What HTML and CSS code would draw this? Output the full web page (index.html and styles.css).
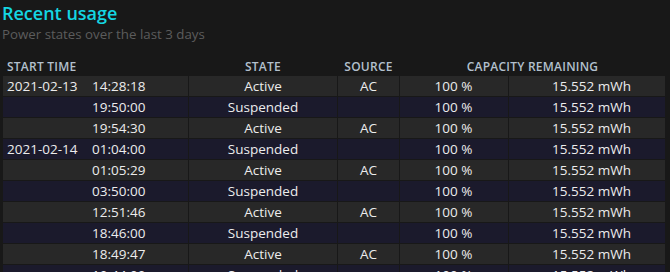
FILE: index.html
```html
<!DOCTYPE html>
<html lang="en">
<head>
<meta charset="utf-8">
<title>Recent usage</title>
<link rel="stylesheet" href="styles.css">
</head>
<body>
<h2 class="title">Recent usage</h2>
<div class="subtitle">Power states over the last 3 days</div>
<table class="usage">
  <colgroup>
    <col class="c-time">
    <col class="c-state">
    <col class="c-source">
    <col class="c-pct">
    <col class="c-mwh">
  </colgroup>
  <thead>
    <tr>
      <th class="left">START TIME</th>
      <th>STATE</th>
      <th>SOURCE</th>
      <th colspan="2">CAPACITY REMAINING</th>
    </tr>
  </thead>
  <tbody>
    <tr class="odd"><td class="dt"><span class="date">2021-02-13</span><span class="time">14:28:18</span></td><td class="state">Active</td><td class="src">AC</td><td class="pct">100 %</td><td class="mwh">15.552 mWh</td></tr>
    <tr class="even"><td class="dt"><span class="date"></span><span class="time">19:50:00</span></td><td class="state">Suspended</td><td class="src"></td><td class="pct">100 %</td><td class="mwh">15.552 mWh</td></tr>
    <tr class="odd"><td class="dt"><span class="date"></span><span class="time">19:54:30</span></td><td class="state">Active</td><td class="src">AC</td><td class="pct">100 %</td><td class="mwh">15.552 mWh</td></tr>
    <tr class="even"><td class="dt"><span class="date">2021-02-14</span><span class="time">01:04:00</span></td><td class="state">Suspended</td><td class="src"></td><td class="pct">100 %</td><td class="mwh">15.552 mWh</td></tr>
    <tr class="odd"><td class="dt"><span class="date"></span><span class="time">01:05:29</span></td><td class="state">Active</td><td class="src">AC</td><td class="pct">100 %</td><td class="mwh">15.552 mWh</td></tr>
    <tr class="even"><td class="dt"><span class="date"></span><span class="time">03:50:00</span></td><td class="state">Suspended</td><td class="src"></td><td class="pct">100 %</td><td class="mwh">15.552 mWh</td></tr>
    <tr class="odd"><td class="dt"><span class="date"></span><span class="time">12:51:46</span></td><td class="state">Active</td><td class="src">AC</td><td class="pct">100 %</td><td class="mwh">15.552 mWh</td></tr>
    <tr class="even"><td class="dt"><span class="date"></span><span class="time">18:46:00</span></td><td class="state">Suspended</td><td class="src"></td><td class="pct">100 %</td><td class="mwh">15.552 mWh</td></tr>
    <tr class="odd"><td class="dt"><span class="date"></span><span class="time">18:49:47</span></td><td class="state">Active</td><td class="src">AC</td><td class="pct">100 %</td><td class="mwh">15.552 mWh</td></tr>
    <tr class="even"><td class="dt"><span class="date"></span><span class="time">19:44:00</span></td><td class="state">Suspended</td><td class="src"></td><td class="pct">100 %</td><td class="mwh">15.552 mWh</td></tr>
  </tbody>
</table>
</body>
</html>
```

FILE: styles.css
```css
html {
  overflow: hidden;
}
body {
  margin: 0;
  padding: 0 2px;
  background: #181818;
  color: #ececec;
  font-family: "Open Sans", "Noto Sans", sans-serif;
}
.title {
  margin: 0;
  font-size: 18px;
  line-height: 26px;
  font-weight: 600;
  color: #14d6e2;
}
.subtitle {
  font-size: 13.3px;
  line-height: 17px;
  color: #5c5c5c;
  margin-bottom: 13px;
}
.usage {
  table-layout: fixed;
  width: 664px;
  border-collapse: separate;
  border-spacing: 1px;
  font-size: 13.5px;
}
.c-time { width: 185px; }
.c-state { width: 148px; }
.c-source { width: 61px; }
.c-pct { width: 108px; }
.c-mwh { width: 156px; }
th {
  font-size: 12px;
  font-weight: 600;
  color: #b3c0cd;
  height: 18px;
  padding: 0 4px;
  text-align: center;
  vertical-align: bottom;
  line-height: 16px;
  letter-spacing: 0.02em;
}
th.left {
  text-align: left;
}
td {
  height: 20px;
  padding: 0 4px;
  line-height: 20px;
  white-space: nowrap;
  box-sizing: border-box;
}
tr.odd td { background: #282828; }
tr.even td { background: #1b1a2c; }
.date {
  display: inline-block;
  width: 85px;
}
.state, .src { text-align: center; }
.pct { text-align: center; padding-right: 5px; }
.mwh { text-align: right; padding-right: 34px; }
```
